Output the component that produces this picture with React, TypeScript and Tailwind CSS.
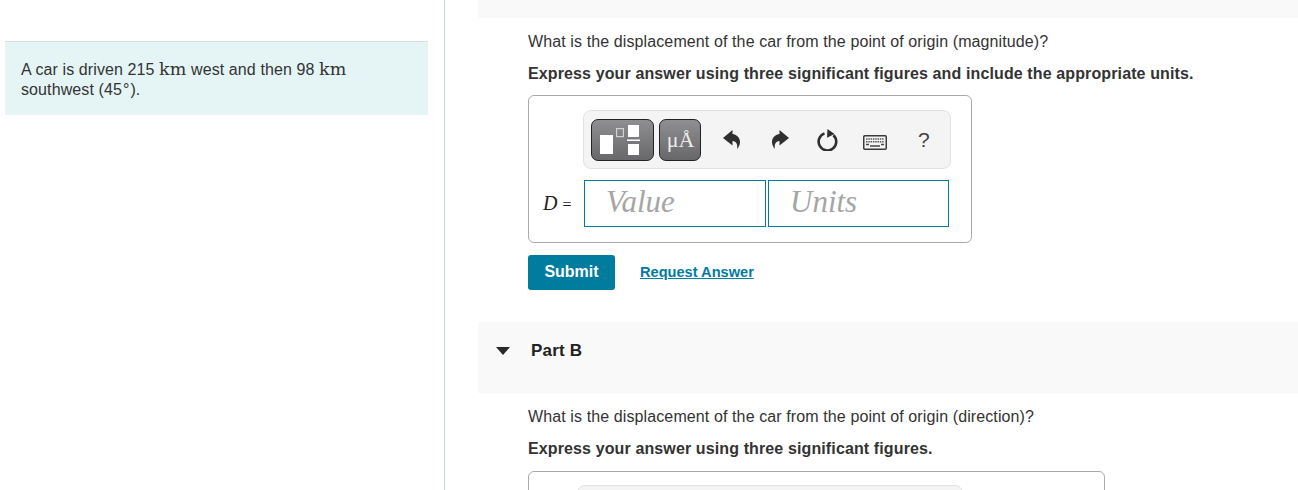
const sans = "font-['Liberation_Sans',Arial,sans-serif]";

function Undo({ flip }: { flip?: boolean }) {
  return (
    <svg width="17" height="19" viewBox="0 0 17 19" className={flip ? "-scale-x-100" : ""}>
      <path d="M0 8 L9.5 0 V4 C14 4.5 17 8 17 12 C17 15 15.5 17.5 14 19 C15 15 13.5 11 9.5 11 V15.5 Z" fill="#2f2f2f" />
    </svg>
  );
}

function Reset() {
  return (
    <svg width="22" height="22" viewBox="0 0 22 22">
      <path d="M7.5 4.4 A8.8 8.8 0 1 0 16.4 6.2" fill="none" stroke="#2f2f2f" strokeWidth="2.6" />
      <path d="M10.5 0 L17.5 5 L10 8.8 Z" fill="#2f2f2f" />
    </svg>
  );
}

function Keyboard() {
  return (
    <svg width="24" height="15" viewBox="0 0 24 15">
      <rect x="0.75" y="0.75" width="22.5" height="13.5" rx="1" fill="#f4f4f4" stroke="#3a3a3a" strokeWidth="1.5" />
      <path d="M3 4h18M3 6.7h18" stroke="#555" strokeWidth="1.5" strokeDasharray="1.5 0.8" />
      <path d="M3 9.5h3M18 9.5h3M7 11h10" stroke="#444" strokeWidth="1.5" />
    </svg>
  );
}

function TemplateIcon() {
  return (
    <svg width="40" height="32" viewBox="0 0 40 32">
      <rect x="0" y="11" width="13" height="19" fill="#fff" />
      <rect x="16.6" y="4.6" width="6.8" height="8" fill="none" stroke="#d0d0d0" strokeWidth="1.2" />
      <rect x="28" y="1" width="11" height="12" fill="#fff" />
      <rect x="27" y="15.5" width="13" height="1.5" fill="#fff" />
      <rect x="28" y="20" width="11" height="11" fill="#fff" />
    </svg>
  );
}

function Toolbar() {
  return (
    <div className="ml-[54px] mt-[14px] flex h-[59px] w-[368px] items-center rounded-lg border border-[#e2e2e2] bg-[#f4f4f4] pl-[7px]">
      <button className="flex h-[42px] w-[63px] items-center justify-center rounded-[7px] border border-[#222] bg-gradient-to-b from-[#8f8f91] to-[#68686a] pr-[5px]">
        <TemplateIcon />
      </button>
      <button className="ml-[5px] flex h-[42px] w-[42px] items-center justify-center rounded-[7px] border border-[#222] bg-gradient-to-b from-[#8f8f91] to-[#68686a] pl-[1px] pt-[1px] font-['Liberation_Serif',serif] text-[22px] leading-none text-[#ececec]">
        μÅ
      </button>
      <span className="ml-[22px] flex w-[17px] justify-center"><Undo /></span>
      <span className="ml-[32px] flex w-[17px] justify-center"><Undo flip /></span>
      <span className="ml-[28px] flex w-[22px] justify-center"><Reset /></span>
      <span className="ml-[24px] mt-[5px] flex w-[24px] justify-center"><Keyboard /></span>
      <span className="ml-[31px] text-[21px] leading-none text-[#444]">?</span>
    </div>
  );
}

export default function App() {
  return (
    <div className={`${sans} flex h-[490px] w-[1298px] overflow-hidden bg-white text-[16px] text-[#333]`}>
      <aside className="h-full w-[445px] shrink-0 border-r border-[#c9d6df] pl-[5px] pr-[16px] pt-[41px]">
        <div className="h-[74px] border-t border-[#d5e0e3] bg-[#e5f5f6] pl-[16px] pr-4 pt-[18px] text-[16px] leading-[20px] tracking-[0.1px]">
          <div>
            A car is driven 215 <span className="font-['DejaVu_Serif',serif] text-[17.5px] leading-none text-[#333]">km</span> west and then 98 <span className="font-['DejaVu_Serif',serif] text-[17.5px] leading-none text-[#333]">km</span>
          </div>
          <div>southwest (45<span className="ml-[1px] mr-[1px]">°</span>).</div>
        </div>
      </aside>

      <main className="ml-[33px] flex-1">
        <div className="h-[18px] bg-[#f9f9f9]" />
        <div className="pl-[50px]">
          <p className="mt-[14px] leading-[20px] tracking-[0.11px]">What is the displacement of the car from the point of origin (magnitude)?</p>
          <p className="mt-[12px] font-bold leading-[20px] tracking-[0.12px]">Express your answer using three significant figures and include the appropriate units.</p>

          <div className="mt-[11px] h-[148px] w-[444px] rounded-md border border-[#aaa]">
            <Toolbar />
            <div className="mt-[11px] flex items-center">
              <span className="ml-[14px] w-[41px] pb-[2px] font-['Liberation_Serif',serif] text-[20px] text-[#222]">
                <i>D</i> <span className="text-[16px]">=</span>
              </span>
              <div className="flex h-[47px] w-[182px] items-center border border-[#007c9e] pb-[2px] pl-[21px] font-['Liberation_Serif',serif] text-[31px] italic text-[#a5a5a5]">
                Value
              </div>
              <div className="ml-[2px] flex h-[47px] w-[181px] items-center border border-[#007c9e] pb-[2px] pl-[21px] font-['Liberation_Serif',serif] text-[31px] italic text-[#a5a5a5]">
                Units
              </div>
            </div>
          </div>

          <div className="mt-[12px] flex items-center">
            <button className="flex h-[35px] w-[87px] items-center justify-center rounded-[3px] bg-[#007c9e] pb-[1px] text-[16px] font-bold text-white">
              Submit
            </button>
            <a className="ml-[25px] text-[14.6px] font-bold text-[#007c9e] underline">Request Answer</a>
          </div>
        </div>

        <div className="mt-[32px] flex h-[71px] items-start bg-[#f9f9f9] pl-[18px] pt-[19px]">
          <svg width="14" height="8" viewBox="0 0 14 8" className="mt-[6px]">
            <path d="M0 0H14L7 8Z" fill="#2a2a2a" />
          </svg>
          <span className="ml-[21px] text-[17px] font-bold leading-[20px] tracking-[0.2px] text-[#222]">Part B</span>
        </div>

        <div className="pl-[50px]">
          <p className="mt-[14px] leading-[20px] tracking-[0.11px]">What is the displacement of the car from the point of origin (direction)?</p>
          <p className="mt-[12px] font-bold leading-[20px] tracking-[0.12px]">Express your answer using three significant figures.</p>
          <div className="mt-[12px] h-[60px] w-[577px] rounded-md border border-[#aaa]">
            <div className="ml-[48px] mt-[13px] h-[40px] w-[386px] rounded-lg border border-[#e2e2e2] bg-[#f4f4f4]" />
          </div>
        </div>
      </main>
    </div>
  );
}
